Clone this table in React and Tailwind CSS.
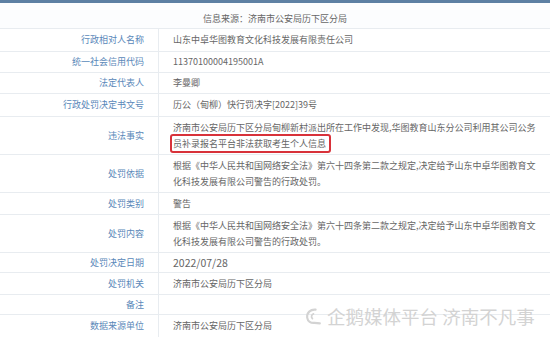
import React from 'react';

const rows = [
  { label: '行政相对人名称', h: 'h-[23px]', lines: ['山东中卓华图教育文化科技发展有限责任公司'] },
  { label: '统一社会信用代码', h: 'h-[21px]', lines: ['11370100004195001A'] },
  { label: '法定代表人', h: 'h-[21px]', lines: ['李曼卿'] },
  { label: '行政处罚决定书文号', h: 'h-[23px]', lines: ['历公（甸柳）快行罚决字[2022]39号'] },
  {
    label: '违法事实',
    h: 'h-[38px]',
    lines: ['济南市公安局历下区分局甸柳新村派出所在工作中发现,华图教育山东分公司利用其公司公务', '员补录报名平台非法获取考生个人信息'],
    boxed: 1,
  },
  {
    label: '处罚依据',
    h: 'h-[38px]',
    lines: ['根据《中华人民共和国网络安全法》第六十四条第二款之规定,决定给予山东中卓华图教育文', '化科技发展有限公司警告的行政处罚。'],
  },
  { label: '处罚类别', h: 'h-[22px]', lines: ['警告'] },
  {
    label: '处罚内容',
    h: 'h-[38px]',
    lines: ['根据《中华人民共和国网络安全法》第六十四条第二款之规定,决定给予山东中卓华图教育文', '化科技发展有限公司警告的行政处罚。'],
  },
  { label: '处罚决定日期', h: 'h-[20px]', lines: ['2022/07/28'], big: true },
  { label: '处罚机关', h: 'h-[22px]', lines: ['济南市公安局历下区分局'] },
  { label: '备注', h: 'h-[20px]', lines: [''] },
  { label: '数据来源单位', h: 'h-[23px]', lines: ['济南市公安局历下区分局'] },
];

const Row = ({ row }) => (
  <div className={`flex border-b border-[#e8ecf0] ${row.h}`}>
    <div className="w-[159px] shrink-0 flex items-center justify-end pr-[14px] border-r border-[#e8ecf0] text-[#5a88b9]">
      {row.label}
    </div>
    <div className={`flex-1 flex flex-col justify-center pl-[14px] text-[#666] leading-[16px] ${row.big ? 'text-[10.5px]' : ''}`}>
      {row.lines.map((line, i) => (
        <div key={i} className="whitespace-nowrap">
          {row.boxed === i ? (
            <span className="relative">
              {line}
              <span className="absolute -left-[3px] -right-[5px] -top-[3px] -bottom-[3px] border-2 border-[#d8323a] rounded-[3px]"></span>
            </span>
          ) : line}
        </div>
      ))}
    </div>
  </div>
);

const App = () => {
  return (
    <div
      className="relative w-[550px] h-[337px] overflow-hidden bg-white text-[9px]"
      style={{ fontFamily: '"Noto Sans CJK SC", "Noto Sans", sans-serif' }}
    >
      <div className="h-[3px] bg-[#5d80a3]"></div>
      <div className="h-[26px] flex items-end justify-center pb-[3px] border-b border-[#e8ecf0] bg-[#fcfdfe] text-[#666]">
        信息来源：济南市公安局历下区分局
      </div>
      {rows.map((row) => (
        <Row key={row.label} row={row} />
      ))}

      {/* watermark */}
      <div className="absolute left-[304px] top-[304px] flex items-center gap-[4px] text-[#d3d3d3] text-[18.5px] leading-[24px]">
        <svg width="19" height="19" viewBox="0 0 18 18" fill="none">
          <path d="M11 2.5 C6 2 2.5 5.5 3 10 C3.5 13.5 6.5 15.5 10 15 L15 15.5" stroke="#d3d3d3" strokeWidth="2" strokeLinecap="round" />
          <path d="M9 6.5 C7 7 6.5 9.5 8 11" stroke="#d3d3d3" strokeWidth="1.6" strokeLinecap="round" />
        </svg>
        <span>企鹅媒体平台 济南不凡事</span>
      </div>
    </div>
  );
};

export default App;
